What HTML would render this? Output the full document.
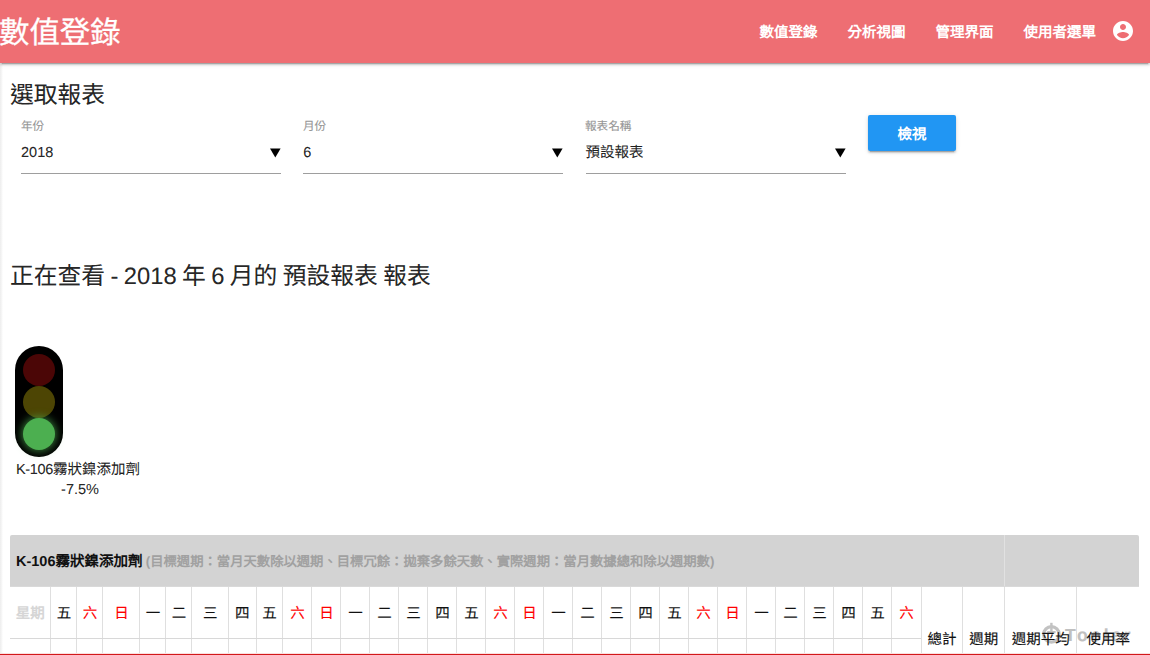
<!DOCTYPE html>
<html lang="zh-TW">
<head>
<meta charset="utf-8">
<title>數值登錄</title>
<style>
html,body{margin:0;padding:0;}
html{width:1150px;height:655px;overflow:hidden;}
body{width:1150px;height:655px;overflow:hidden;position:relative;background:#fff;font-family:"Liberation Sans",sans-serif;font-size:14.5px;color:rgba(0,0,0,0.87);line-height:1.5;text-rendering:geometricPrecision;-webkit-text-stroke:0.12px;}
.abs{position:absolute;white-space:nowrap;}
#leftedge{position:absolute;left:0;top:63px;width:3px;height:592px;background:linear-gradient(to right,#ededed,#f5f5f5 50%,#fff);}
nav{position:absolute;left:0;top:0;width:1150px;height:62.5px;background:#ee6e73;box-shadow:0 2px 2px 0 rgba(0,0,0,0.14),0 1px 5px 0 rgba(0,0,0,0.12),0 3px 1px -2px rgba(0,0,0,0.2);color:#fff;}
nav .brand{-webkit-text-stroke:0.3px;position:absolute;left:-1px;top:2px;font-size:30.45px;line-height:63px;height:63px;white-space:nowrap;}
nav .lnk{-webkit-text-stroke:0;position:absolute;top:2px;line-height:63px;height:63px;font-size:14.5px;font-weight:700;white-space:nowrap;}
h5{position:absolute;margin:0;font-weight:400;font-size:23.78px;line-height:1.1;white-space:nowrap;color:rgba(0,0,0,0.87);}
.lbl{position:absolute;font-size:11.6px;color:#969696;line-height:1.5;white-space:nowrap;}
.sel{position:absolute;top:130.5px;height:42.6px;border-bottom:1px solid #9e9e9e;width:260px;line-height:44.8px;font-size:14.5px;white-space:nowrap;}
.sel svg{position:absolute;right:0;top:17.5px;}
.btn{-webkit-text-stroke:0;position:absolute;left:868px;top:115px;width:88px;height:36px;line-height:41.5px;background:#2196f3;color:#fff;text-align:center;border-radius:2px;font-size:14.5px;font-weight:700;box-shadow:0 2px 2px 0 rgba(0,0,0,0.14),0 1px 5px 0 rgba(0,0,0,0.12),0 3px 1px -2px rgba(0,0,0,0.2);}
#light{position:absolute;left:15px;top:346px;width:48px;height:111px;border-radius:24px;background:#000;}
#light i{position:absolute;left:8px;width:32px;height:32px;border-radius:50%;display:block;}
.cap{position:absolute;left:0px;width:156px;text-align:center;font-size:14.5px;line-height:21.5px;white-space:nowrap;}
#thead{position:absolute;left:10px;top:535px;width:1129.4px;height:52px;box-sizing:border-box;border-bottom:1px solid #d9d9d9;background:#d3d3d3;border-radius:2px 2px 0 0;}
#thead .sep{position:absolute;left:994.4px;top:0;width:1px;height:51px;background:#e1e1e1;}
#thead .t{-webkit-text-stroke:0;position:absolute;left:6px;top:1px;line-height:51.5px;font-weight:700;white-space:nowrap;font-size:14.5px;color:#111;}
#thead .t span{color:#a1a1a1;font-size:13.33px;margin-left:-0.8px;}
.c{position:absolute;top:587px;height:51.2px;padding-top:1.7px;line-height:51.7px;text-align:center;border-left:1px solid #dfdfdf;box-sizing:border-box;white-space:nowrap;font-size:14.5px;color:#111;}
.c.wk{border-left:none;color:#d6d6d6;font-weight:700;-webkit-text-stroke:0;}
.c.red{color:#f00;}
.c.tall{height:67.7px;line-height:29px;padding-top:38.7px;}
#hline{position:absolute;left:10px;top:638px;width:910.5px;height:1px;background:#d8d8d8;}
.v2{position:absolute;top:639px;height:16px;width:1px;background:#dfdfdf;}
#redline{position:absolute;left:0;top:653px;width:1150px;height:2px;background:linear-gradient(to bottom,#fae0df 0,#fae0df 50%,#d2181a 50%,#d2181a 100%);}
#wm{position:absolute;left:1041px;top:621px;width:100px;height:26px;color:#c0c0c0;font-weight:700;font-size:17.5px;line-height:24px;white-space:nowrap;letter-spacing:2.7px;}
</style>
</head>
<body>
<div id="leftedge"></div>

<h5 style="left:10px;top:83px;">選取報表</h5>

<div class="lbl" style="left:21px;top:117.5px;">年份</div>
<div class="lbl" style="left:303px;top:117.5px;">月份</div>
<div class="lbl" style="left:585px;top:117.5px;">報表名稱</div>

<div class="sel" style="left:21px;">2018<svg width="11" height="10" viewBox="0 0 11 10"><path d="M0 0.5H10.6L5.3 9.4Z" fill="#000"/></svg></div>
<div class="sel" style="left:303.3px;">6<svg width="11" height="10" viewBox="0 0 11 10"><path d="M0 0.5H10.6L5.3 9.4Z" fill="#000"/></svg></div>
<div class="sel" style="left:585.6px;">預設報表<svg width="11" height="10" viewBox="0 0 11 10"><path d="M0 0.5H10.6L5.3 9.4Z" fill="#000"/></svg></div>

<div class="btn">檢視</div>

<h5 style="left:10px;top:264px;word-spacing:-1.2px;">正在查看 - 2018 年 6 月的 預設報表 報表</h5>

<div id="light">
<i style="top:7.7px;background:#4b0606;"></i>
<i style="top:39.8px;background:#4d4504;"></i>
<i style="top:72px;background:#4caf50;box-shadow:0 0 8px 1px rgba(76,175,80,0.75);"></i>
</div>
<div class="cap" style="top:460px;"><span style="letter-spacing:-0.3px">K-106</span>霧狀鎳添加劑</div>
<div class="cap" style="top:480px;left:2px;">-7.5%</div>

<div id="wm"><svg width="22" height="24" viewBox="0 0 22 24" style="position:absolute;left:0;top:0"><circle cx="10.4" cy="13.4" r="7.8" fill="none" stroke="#c2c2c2" stroke-width="3.2"/><rect x="9.2" y="1.8" width="2.4" height="9" fill="#c2c2c2"/><rect x="6.2" y="10" width="8.4" height="2.2" fill="#c2c2c2"/></svg><span style="position:absolute;left:24px;top:2px;">Tooler</span></div>
<div id="thead"><div class="sep"></div><div class="t">K-106霧狀鎳添加劑 <span>(目標週期：當月天數除以週期、目標冗餘：拋棄多餘天數、實際週期：當月數據總和除以週期數)</span></div></div>
<div class="c wk" style="left:10px;width:40.4px">星期</div>
<div class="c" style="left:50.4px;width:26.0px">五</div>
<div class="c red" style="left:76.4px;width:26.0px">六</div>
<div class="c red" style="left:102.4px;width:37.0px">日</div>
<div class="c" style="left:139.4px;width:26.0px">一</div>
<div class="c" style="left:165.4px;width:26.0px">二</div>
<div class="c" style="left:191.4px;width:36.8px">三</div>
<div class="c" style="left:228.2px;width:27.3px">四</div>
<div class="c" style="left:255.5px;width:26.9px">五</div>
<div class="c red" style="left:282.4px;width:29.0px">六</div>
<div class="c red" style="left:311.4px;width:29.0px">日</div>
<div class="c" style="left:340.4px;width:29.0px">一</div>
<div class="c" style="left:369.4px;width:29.0px">二</div>
<div class="c" style="left:398.4px;width:29.0px">三</div>
<div class="c" style="left:427.4px;width:29.0px">四</div>
<div class="c" style="left:456.4px;width:29.0px">五</div>
<div class="c red" style="left:485.4px;width:29.0px">六</div>
<div class="c red" style="left:514.4px;width:29.0px">日</div>
<div class="c" style="left:543.4px;width:29.0px">一</div>
<div class="c" style="left:572.4px;width:29.0px">二</div>
<div class="c" style="left:601.4px;width:29.0px">三</div>
<div class="c" style="left:630.4px;width:29.0px">四</div>
<div class="c" style="left:659.4px;width:29.0px">五</div>
<div class="c red" style="left:688.4px;width:29.0px">六</div>
<div class="c red" style="left:717.4px;width:29.0px">日</div>
<div class="c" style="left:746.4px;width:29.0px">一</div>
<div class="c" style="left:775.4px;width:29.0px">二</div>
<div class="c" style="left:804.4px;width:29.0px">三</div>
<div class="c" style="left:833.4px;width:29.0px">四</div>
<div class="c" style="left:862.4px;width:29.0px">五</div>
<div class="c red" style="left:891.4px;width:29.1px">六</div>
<div class="c tall" style="left:920.5px;width:41.8px">總計</div>
<div class="c tall" style="left:962.3px;width:42.1px">週期</div>
<div class="c tall" style="left:1004.4px;width:71.9px">週期平均</div>
<div class="c tall" style="left:1076.3px;width:63.1px">使用率</div>
<div id="hline"></div>
<div class="v2" style="left:50.4px"></div>
<div class="v2" style="left:76.4px"></div>
<div class="v2" style="left:102.4px"></div>
<div class="v2" style="left:139.4px"></div>
<div class="v2" style="left:165.4px"></div>
<div class="v2" style="left:191.4px"></div>
<div class="v2" style="left:228.2px"></div>
<div class="v2" style="left:255.5px"></div>
<div class="v2" style="left:282.4px"></div>
<div class="v2" style="left:311.4px"></div>
<div class="v2" style="left:340.4px"></div>
<div class="v2" style="left:369.4px"></div>
<div class="v2" style="left:398.4px"></div>
<div class="v2" style="left:427.4px"></div>
<div class="v2" style="left:456.4px"></div>
<div class="v2" style="left:485.4px"></div>
<div class="v2" style="left:514.4px"></div>
<div class="v2" style="left:543.4px"></div>
<div class="v2" style="left:572.4px"></div>
<div class="v2" style="left:601.4px"></div>
<div class="v2" style="left:630.4px"></div>
<div class="v2" style="left:659.4px"></div>
<div class="v2" style="left:688.4px"></div>
<div class="v2" style="left:717.4px"></div>
<div class="v2" style="left:746.4px"></div>
<div class="v2" style="left:775.4px"></div>
<div class="v2" style="left:804.4px"></div>
<div class="v2" style="left:833.4px"></div>
<div class="v2" style="left:862.4px"></div>
<div class="v2" style="left:891.4px"></div>

<div id="redline"></div>

<nav>
<div class="brand">數值登錄</div>
<div class="lnk" style="left:759.5px;">數值登錄</div>
<div class="lnk" style="left:847.5px;">分析視圖</div>
<div class="lnk" style="left:935.5px;">管理界面</div>
<div class="lnk" style="left:1023.5px;">使用者選單</div>
<svg style="position:absolute;left:1110.8px;top:19.4px;" width="24" height="24" viewBox="0 0 24 24"><path fill="#fff" d="M12 2C6.48 2 2 6.48 2 12s4.48 10 10 10 10-4.48 10-10S17.52 2 12 2zm0 3c1.66 0 3 1.34 3 3s-1.34 3-3 3-3-1.34-3-3 1.34-3 3-3zm0 14.2c-2.5 0-4.71-1.28-6-3.22.03-1.99 4-3.08 6-3.08 1.99 0 5.97 1.09 6 3.08-1.29 1.94-3.5 3.22-6 3.22z"/></svg>
</nav>
</body>
</html>
